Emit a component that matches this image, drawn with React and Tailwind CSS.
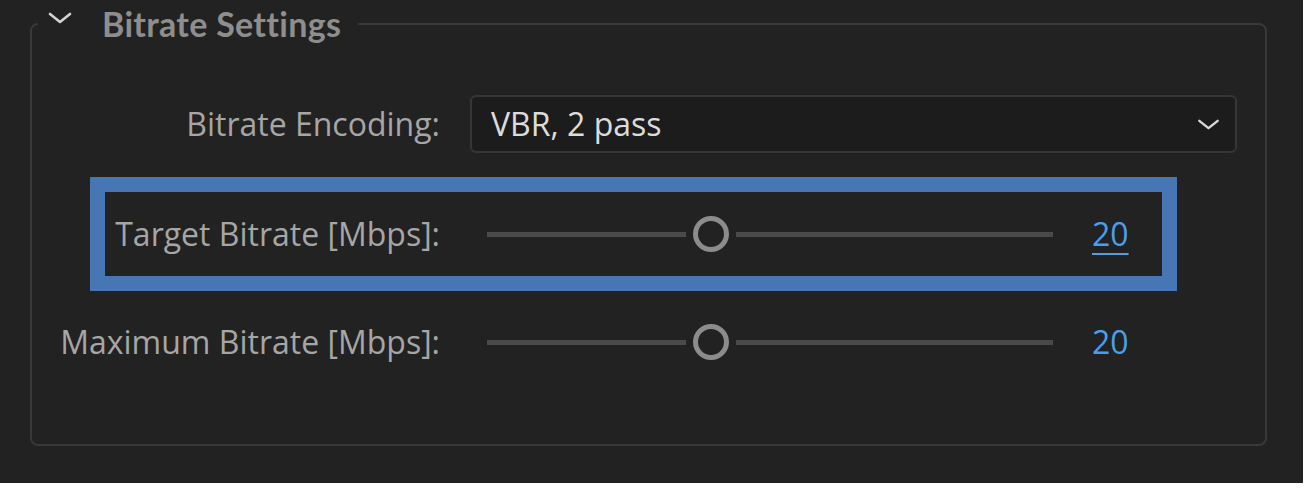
import React from "react";

const labelFont = { fontFamily: '"Open Sans", "Noto Sans", sans-serif' };

function Chevron({ className }) {
  return (
    <svg viewBox="0 0 24 12" className={className} fill="none">
      <polyline points="2,2 12,10 22,2" stroke="currentColor" strokeWidth="2.6" strokeLinecap="round" strokeLinejoin="round" />
    </svg>
  );
}

function Slider() {
  // value 20 of 50 -> thumb sits at 40% of the track
  return (
    <div className="flex items-center w-[566px]">
      <div className="w-[199px] h-[5px] bg-[#4a4a4a]" />
      <div className="ml-[7px] w-[36px] h-[36px] rounded-full border-[5px] border-[#8c8c8c] shrink-0" />
      <div className="ml-[7px] flex-1 h-[5px] bg-[#4a4a4a]" />
    </div>
  );
}

function SliderRow({ label, value, labelWidth, underline }) {
  return (
    <div className="flex items-center h-[58px]">
      <div className="text-right text-[32px] text-[#a6a6a6] leading-none shrink-0" style={{ width: labelWidth }}>
        {label}
      </div>
      <div className="ml-[47px]">
        <Slider />
      </div>
      <span
        className={`ml-[39px] text-[32px] leading-none text-[#4b9fea] ${underline ? "underline decoration-2 underline-offset-[7px]" : ""}`}
      >
        {value}
      </span>
    </div>
  );
}

export default function App() {
  return (
    <div className="w-[1303px] h-[483px] bg-[#222222] pt-[4px] pl-[30px]" style={labelFont}>
      <fieldset className="w-[1237px] border-2 border-[#393939] rounded-[8px]">
        <legend className="ml-[6px] h-[40px] pl-[10px] pr-[17px] flex items-center">
          <Chevron className="w-[24px] h-[12px] text-[#d4d4d4] -mt-[12px]" />
          <span
            className="ml-[30px] text-[34px] font-bold text-[#8e8e8e] leading-none tracking-[0.3px]"
            style={{ fontFamily: "Lato, sans-serif" }}
          >
            Bitrate Settings
          </span>
        </legend>

        <div className="pt-[51px] pb-[73px]">
          <div className="flex items-center">
            <div className="w-[408px] text-right text-[32px] text-[#a6a6a6] leading-none">Bitrate Encoding:</div>
            <div className="ml-[30px] w-[767px] h-[58px] bg-[#1c1c1c] border-2 border-[#363636] rounded-[6px] flex items-center justify-between pl-[19px] pr-[15px]">
              <span className="text-[32px] text-[#dcdcdc] leading-none">VBR, 2 pass</span>
              <Chevron className="w-[23px] h-[11px] text-[#d8d8d8]" />
            </div>
          </div>

          <div className="mt-[24px] ml-[58px] w-[1087px] border-[15px] border-[#4676b4] py-[13px]">
            <SliderRow label="Target Bitrate [Mbps]:" value="20" labelWidth={335} underline />
          </div>

          <div className="mt-[22px]">
            <SliderRow label="Maximum Bitrate [Mbps]:" value="20" labelWidth={408} />
          </div>
        </div>
      </fieldset>
    </div>
  );
}
